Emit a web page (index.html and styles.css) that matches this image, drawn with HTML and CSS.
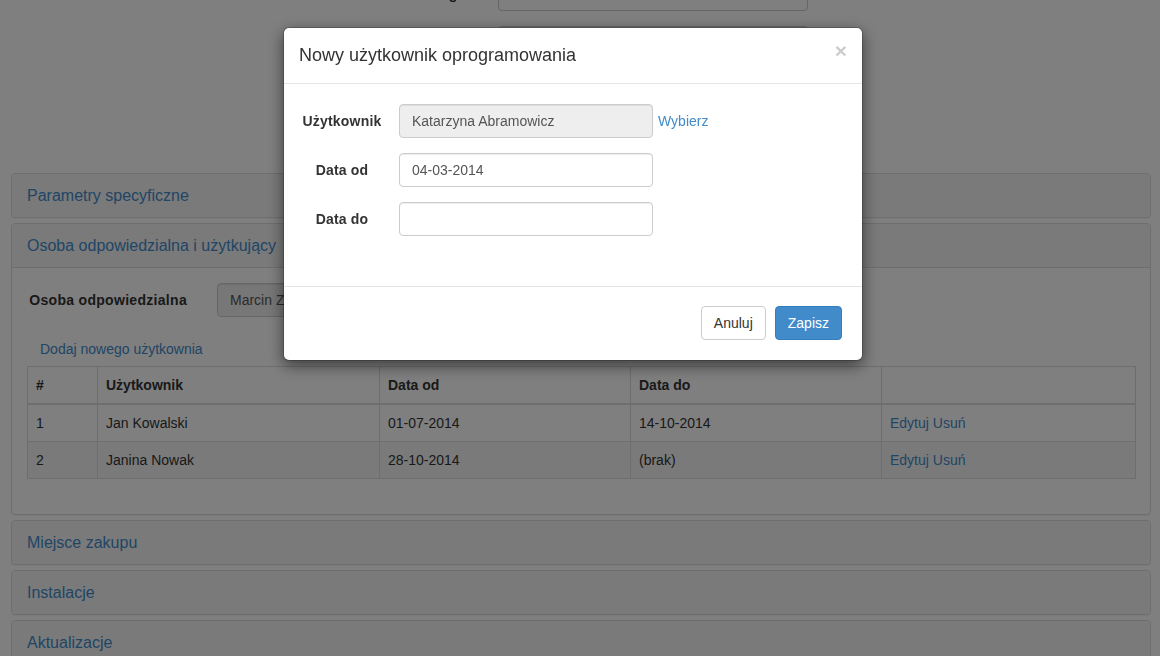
FILE: index.html
```html
<!DOCTYPE html>
<html lang="pl">
<head>
<meta charset="utf-8">
<title>Nowy użytkownik oprogramowania</title>
<link rel="stylesheet" href="styles.css">
</head>
<body>
<div class="page">
  <form class="top-form">
    <div class="top-row">
      <label class="top-label">Kategoria</label>
      <input class="form-control top-input" type="text" value="">
    </div>
    <div class="top-row">
      <span class="top-label"></span>
      <input class="form-control top-input" type="text" value="">
    </div>
    <div class="top-row">
      <span class="top-label"></span>
      <input class="form-control top-input" type="text" value="">
    </div>
    <div class="top-row">
      <span class="top-label"></span>
      <input class="form-control top-input" type="text" value="">
    </div>
  </form>

  <div class="panel-group">
    <div class="panel">
      <div class="panel-heading"><h4 class="panel-title"><a href="#">Parametry specyficzne</a></h4></div>
    </div>
    <div class="panel">
      <div class="panel-heading"><h4 class="panel-title"><a href="#">Osoba odpowiedzialna i użytkujący</a></h4></div>
      <div class="panel-body">
        <div class="form-row">
          <label class="row-label">Osoba odpowiedzialna</label>
          <input class="form-control row-input" type="text" value="Marcin Zawadzki" disabled>
        </div>
        <div class="add-row"><a class="btn-link" href="#">Dodaj nowego użytkownia</a></div>
        <table class="table">
          <colgroup>
            <col class="c-num"><col class="c-user"><col class="c-date"><col class="c-date"><col class="c-act">
          </colgroup>
          <thead>
            <tr><th>#</th><th>Użytkownik</th><th>Data od</th><th>Data do</th><th></th></tr>
          </thead>
          <tbody>
            <tr><td>1</td><td>Jan Kowalski</td><td>01-07-2014</td><td>14-10-2014</td><td><a href="#">Edytuj</a> <a href="#">Usuń</a></td></tr>
            <tr class="hover"><td>2</td><td>Janina Nowak</td><td>28-10-2014</td><td>(brak)</td><td><a href="#">Edytuj</a> <a href="#">Usuń</a></td></tr>
          </tbody>
        </table>
      </div>
    </div>
    <div class="panel">
      <div class="panel-heading"><h4 class="panel-title"><a href="#">Miejsce zakupu</a></h4></div>
    </div>
    <div class="panel">
      <div class="panel-heading"><h4 class="panel-title"><a href="#">Instalacje</a></h4></div>
    </div>
    <div class="panel">
      <div class="panel-heading"><h4 class="panel-title"><a href="#">Aktualizacje</a></h4></div>
    </div>
  </div>
</div>

<div class="backdrop"></div>

<div class="modal-dialog">
  <div class="modal-content">
    <div class="modal-header">
      <button class="close" type="button">×</button>
      <h4 class="modal-title">Nowy użytkownik oprogramowania</h4>
    </div>
    <div class="modal-body">
      <div class="form-group">
        <label class="control-label">Użytkownik</label>
        <input class="form-control" type="text" value="Katarzyna Abramowicz" disabled>
        <a class="pick-link" href="#">Wybierz</a>
      </div>
      <div class="form-group">
        <label class="control-label">Data od</label>
        <input class="form-control" type="text" value="04-03-2014">
      </div>
      <div class="form-group">
        <label class="control-label">Data do</label>
        <input class="form-control" type="text" value="">
      </div>
    </div>
    <div class="modal-footer">
      <button class="btn btn-default" type="button">Anuluj</button>
      <button class="btn btn-primary" type="button">Zapisz</button>
    </div>
  </div>
</div>
</body>
</html>
```
FILE: styles.css
```css
* { box-sizing: border-box; }

html, body {
  margin: 0;
  padding: 0;
}

body {
  font-family: "Liberation Sans", Arial, sans-serif;
  font-size: 14px;
  line-height: 20px;
  color: #333;
  background: #fff;
  overflow: hidden;
  height: 656px;
}

a { color: #428bca; text-decoration: none; }

.page {
  width: 1140px;
  margin: -23px 0 0 11px;
}

/* form controls */
.form-control {
  display: block;
  height: 34px;
  padding: 6px 12px;
  font-family: inherit;
  font-size: 14px;
  line-height: 20px;
  color: #555;
  background: #fff;
  border: 1px solid #ccc;
  border-radius: 4px;
  box-shadow: inset 0 1px 1px rgba(0,0,0,.075);
  margin: 0;
}
.form-control[disabled] {
  background: #eee;
}

/* top form (mostly hidden by the modal) */
.top-form { margin: 0; }
.top-row {
  display: flex;
  margin-bottom: 15px;
}
.top-label {
  flex: 0 0 472px;
  padding-top: 7px;
  text-align: right;
  font-weight: bold;
}
.top-input {
  margin-left: 15px;
  width: 310px;
}

/* panels */
.panel-group { margin-bottom: 20px; }
.panel {
  background: #fff;
  border: 1px solid #ddd;
  border-radius: 4px;
  box-shadow: 0 1px 1px rgba(0,0,0,.05);
  overflow: hidden;
}
.panel + .panel { margin-top: 5px; }
.panel-heading {
  padding: 10px 15px;
  background: #f5f5f5;
}
.panel-title {
  margin: 0;
  font-size: 16px;
  line-height: 23px;
  font-weight: normal;
}
.panel-body {
  border-top: 1px solid #ddd;
  padding: 15px;
}

.form-row {
  display: flex;
  margin-bottom: 15px;
}
.row-label {
  flex: 0 0 160px;
  padding-top: 7px;
  text-align: right;
  font-weight: bold;
  letter-spacing: .3px;
  white-space: nowrap;
}
.row-input {
  margin-left: 30px;
  width: 349px;
}
.add-row { display: flex; }
.btn-link {
  display: block;
  padding: 6px 12px;
  border: 1px solid transparent;
  line-height: 20px;
}

.table {
  width: 100%;
  table-layout: fixed;
  border-collapse: collapse;
  border: 1px solid #ddd;
  margin-bottom: 20px;
}
.c-num { width: 70px; }
.c-user { width: 282px; }
.c-date { width: 251px; }
.c-act { width: 254px; }
.table th, .table td {
  padding: 8px;
  border: 1px solid #ddd;
  text-align: left;
  vertical-align: top;
  line-height: 20px;
}
.table thead th { border-bottom-width: 2px; }
.table tr.hover td { background: #f5f5f5; }

/* modal */
.backdrop {
  position: fixed;
  inset: 0;
  background: #000;
  opacity: .5;
  z-index: 10;
}
.modal-dialog {
  position: fixed;
  left: 283px;
  top: 27px;
  width: 580px;
  z-index: 20;
}
.modal-content {
  background: #fff;
  background-clip: padding-box;
  border: 1px solid rgba(0,0,0,.2);
  border-radius: 6px;
  box-shadow: 0 5px 15px rgba(0,0,0,.5);
}
.modal-header {
  padding: 15px;
  border-bottom: 1px solid #e5e5e5;
}
.modal-title {
  margin: 0;
  font-size: 18px;
  line-height: 25px;
  font-weight: normal;
  color: #333;
}
.close {
  float: right;
  margin-top: -3px;
  padding: 0;
  background: none;
  border: 0;
  font-family: inherit;
  font-size: 21px;
  font-weight: bold;
  line-height: 1;
  color: #000;
  opacity: .2;
  text-shadow: 0 1px 0 #fff;
}
.modal-body {
  padding: 20px 20px 20px 15px;
}
.form-group {
  display: grid;
  grid-template-columns: 100px 254px auto;
  align-items: start;
  margin-bottom: 15px;
}
.control-label {
  padding: 7px 14px 0 0;
  text-align: center;
  font-weight: bold;
  letter-spacing: .2px;
  white-space: nowrap;
}
.pick-link {
  padding-top: 7px;
  margin-left: 5px;
}
.modal-footer {
  margin-top: 15px;
  padding: 19px 20px 20px 20px;
  border-top: 1px solid #e5e5e5;
  display: flex;
  justify-content: flex-end;
  gap: 9px;
}
.btn {
  display: inline-block;
  height: 34px;
  padding: 6px 12px;
  font-family: inherit;
  font-size: 14px;
  line-height: 20px;
  border: 1px solid transparent;
  border-radius: 4px;
}
.btn-default {
  color: #333;
  background: #fff;
  border-color: #ccc;
}
.btn-primary {
  color: #fff;
  background: #428bca;
  border-color: #357ebd;
}
```
